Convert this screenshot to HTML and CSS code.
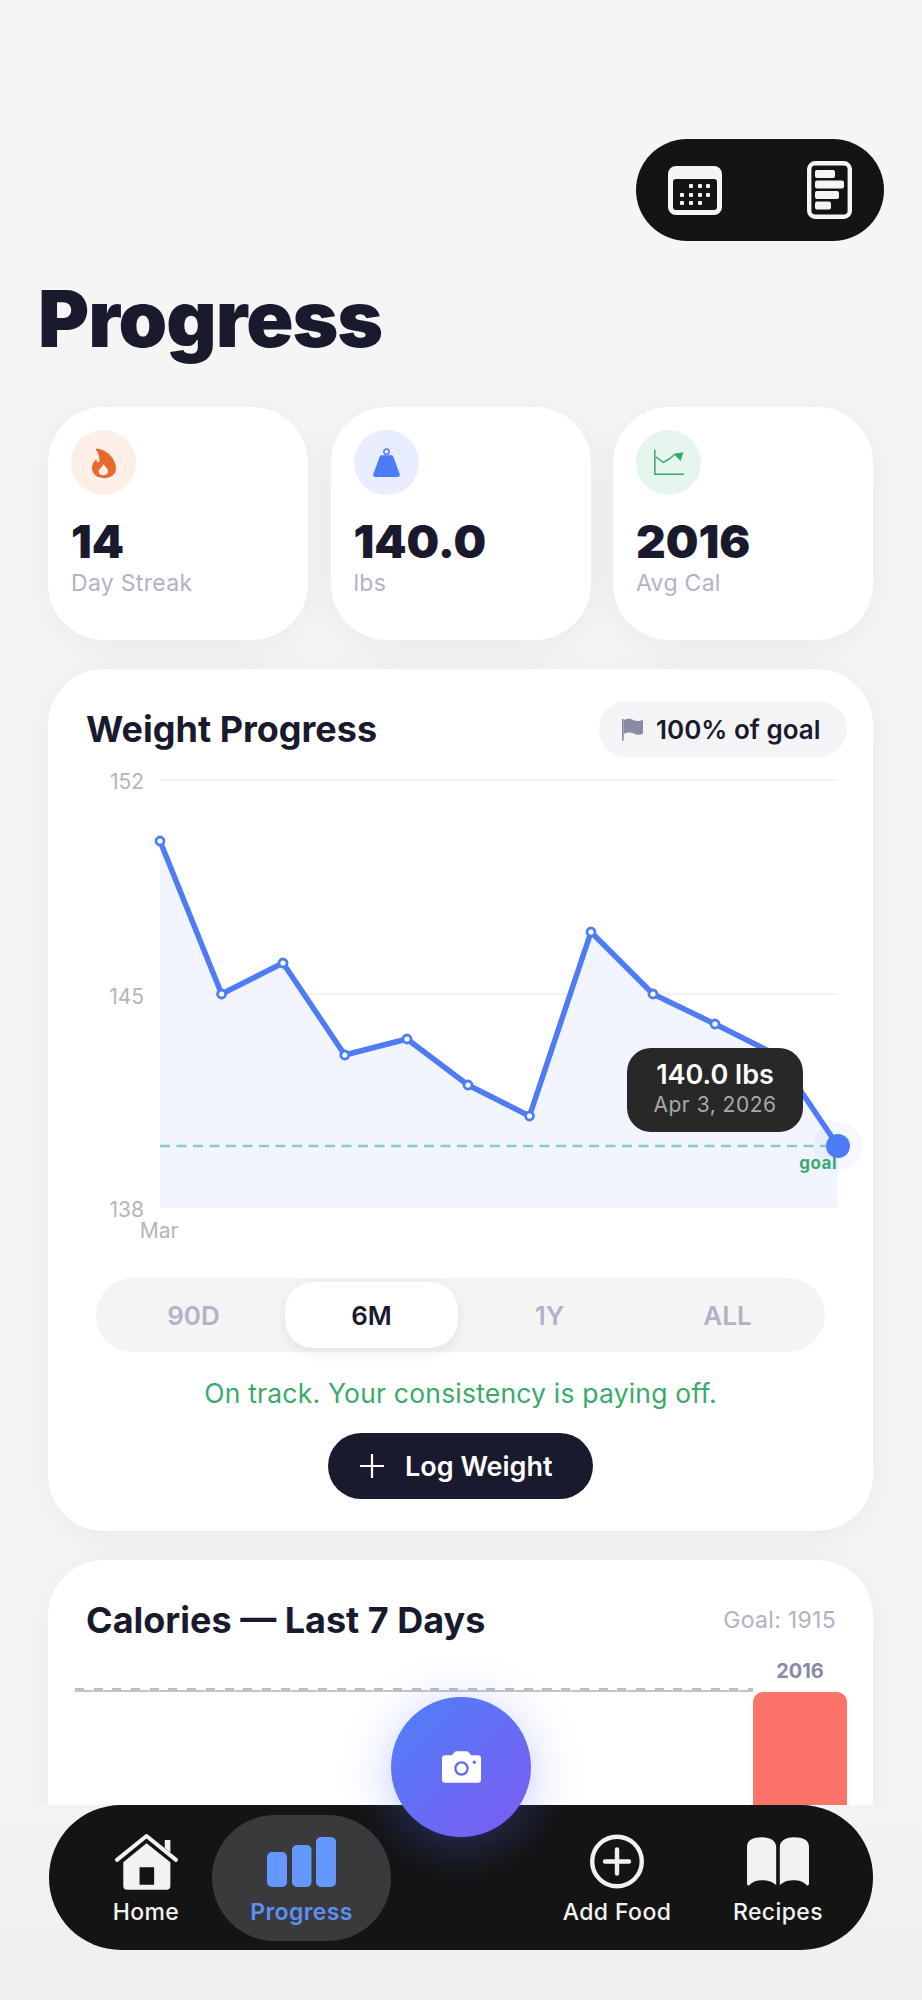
FILE: index.html
```html
<!DOCTYPE html>
<html lang="en">
<head>
<meta charset="utf-8">
<title>Progress</title>
<link rel="stylesheet" href="styles.css">
</head>
<body>
<div class="app">
  <header class="top">
    <div class="top-actions">
      <svg class="ico-cal" viewBox="0 0 54 49"><path fill="#f5f5f5" fill-rule="evenodd" d="M8 0H46A8 8 0 0 1 54 8V41A8 8 0 0 1 46 49H8A8 8 0 0 1 0 41V8A8 8 0 0 1 8 0ZM8 13A3 3 0 0 0 5 16V41A3 3 0 0 0 8 44H46A3 3 0 0 0 49 41V16A3 3 0 0 0 46 13Z"/><g fill="#f5f5f5"><rect x="21" y="18" width="4" height="4" rx="1"/><rect x="30" y="18" width="4" height="4" rx="1"/><rect x="38" y="18" width="4" height="4" rx="1"/><rect x="12" y="27" width="4" height="4" rx="1"/><rect x="21" y="27" width="4" height="4" rx="1"/><rect x="30" y="27" width="4" height="4" rx="1"/><rect x="38" y="27" width="4" height="4" rx="1"/><rect x="12" y="35" width="4" height="4" rx="1"/><rect x="21" y="35" width="4" height="4" rx="1"/><rect x="30" y="35" width="4" height="4" rx="1"/></g></svg>
      <svg class="ico-bars" viewBox="0 0 45 58"><rect x="2.2" y="2.2" width="40.6" height="53.6" rx="6" fill="none" stroke="#f5f5f5" stroke-width="4.4"/><g fill="#f5f5f5"><rect x="8" y="9" width="20" height="8" rx="2"/><rect x="8" y="19.500" width="29" height="8" rx="2"/><rect x="8" y="30" width="24" height="8" rx="2"/><rect x="8" y="40.500" width="16" height="8" rx="2"/></g></svg>
    </div>
    <h1 class="page-title">Progress</h1>
  </header>

  <main class="scroll">
    <section class="stats">
      <div class="stat">
        <div class="stat-icon bg-orange"><svg class="i-flame" viewBox="0 0 72 90"><path fill="#e8692c" d="M10 2C35 0 72 25 72 62C72 80 55 90 36 90C15 90 0 78 0 60C0 48 6 42 12 34C14 42 18 44 22 42C24 30 20 14 10 2Z"/><path fill="#fdeee7" d="M34 48C38 56 48 60 48 70C48 78 42 82 34 82C26 82 20 78 20 70C20 62 30 60 34 48Z"/></svg></div>
        <div class="stat-value">14</div>
        <div class="stat-label">Day Streak</div>
      </div>
      <div class="stat">
        <div class="stat-icon bg-blue"><svg class="i-weight" viewBox="0 0 81 87"><circle cx="40.500" cy="11" r="8" fill="none" stroke="#4d7cf6" stroke-width="4.500"/><path fill="#4d7cf6" d="M20 26Q21 22 26 22H55Q60 22 61 26L80 78Q82 87 74 87H7Q-1 87 1 78Z"/></svg></div>
        <div class="stat-value">140.0</div>
        <div class="stat-label">lbs</div>
      </div>
      <div class="stat">
        <div class="stat-icon bg-green"><svg class="i-trend" viewBox="0 0 90 78"><path d="M2.500 2V75.500H90" fill="none" stroke="#35a968" stroke-width="4.500"/><path d="M6 24L28 40L46 30L60 18" fill="none" stroke="#35a968" stroke-width="4.500"/><path fill="#35a968" d="M88 10L80 36L58 14Z"/></svg></div>
        <div class="stat-value">2016</div>
        <div class="stat-label">Avg Cal</div>
      </div>
    </section>

    <section class="card weight-card">
      <div class="card-head">
        <h2 class="card-title">Weight Progress</h2>
        <div class="goal-pill">
          <svg class="i-flag" viewBox="0 0 64 68"><rect x="0" y="2" width="5" height="66" fill="#8a8aa5"/><path fill="#8a8aa5" d="M5 6C20 -2 30 2 36 6C46 10 56 8 64 4V46C54 52 44 50 36 46C26 42 16 42 5 48Z"/></svg>
          <span>100% of goal</span>
        </div>
      </div>
      <div class="chart">
        <svg class="chart-svg" viewBox="48 760 825 500">
          <path d="M160 841L221.600 994L283 963L344.800 1055L407 1039L468 1085L529.500 1116L591 932L653 994L715 1024L776.500 1055L838 1146V1207H160Z" fill="#f2f5fe"/>
          <g stroke="#f0f0f2" stroke-width="1.500"><path d="M160 780H838"/><path d="M160 994H838"/><path d="M160 1207H838"/></g>
          <path d="M160 1146H838" stroke="#8acfb0" stroke-width="2.500" stroke-dasharray="10 6.500"/>
          <path d="M160 841L221.600 994L283 963L344.800 1055L407 1039L468 1085L529.500 1116L591 932L653 994L715 1024L776.500 1055L838 1146" fill="none" stroke="#4d7cf6" stroke-width="5.500" stroke-linejoin="round"/>
          <g fill="#fff" stroke="#4d7cf6" stroke-width="2.800">
            <circle cx="160" cy="841" r="4"/><circle cx="221.600" cy="994" r="4"/><circle cx="283" cy="963" r="4"/><circle cx="344.800" cy="1055" r="4"/><circle cx="407" cy="1039" r="4"/><circle cx="468" cy="1085" r="4"/><circle cx="529.500" cy="1116" r="4"/><circle cx="591" cy="932" r="4"/><circle cx="653" cy="994" r="4"/><circle cx="715" cy="1024" r="4"/>
          </g>
          <g class="axis"><text x="144" y="789" text-anchor="end">152</text><text x="144" y="1004" text-anchor="end">145</text><text x="144" y="1217" text-anchor="end">138</text><text x="159" y="1238" text-anchor="middle">Mar</text></g>
          <text class="goal-text" x="837" y="1169" text-anchor="end">goal</text>
          <circle cx="838" cy="1146" r="24" fill="#4d7cf6" opacity=".05"/>
          <circle cx="838" cy="1146" r="12" fill="#4d7cf6"/>
        </svg>
        <div class="tip"><div class="tip-value">140.0 lbs</div><div class="tip-date">Apr 3, 2026</div></div>
      </div>
      <div class="segment">
        <div class="seg">90D</div>
        <div class="seg seg-active">6M</div>
        <div class="seg">1Y</div>
        <div class="seg">ALL</div>
      </div>
      <p class="track">On track. Your consistency is paying off.</p>
      <div class="log-row">
        <div class="log-btn"><svg class="i-plus" viewBox="0 0 24 24"><path d="M12 0V24M0 12H24" stroke="#fff" stroke-width="2.200"/></svg><span>Log Weight</span></div>
      </div>
    </section>

    <section class="card cal-card">
      <div class="card-head cal-head">
        <h2 class="card-title">Calories — Last 7 Days</h2>
        <span class="cal-goal">Goal: 1915</span>
      </div>
      <div class="bars">
        <div class="goal-line"></div>
        <div class="bar-col">
          <div class="bar-value">2016</div>
          <div class="bar"></div>
        </div>
      </div>
    </section>
  </main>

  <div class="tabbar">
    <nav class="nav">
      <div class="tab tab-home">
        <svg class="i-home" viewBox="0 0 190 170"><path fill="#f2f2f2" d="M150 20H167V58L150 44Z"/><path fill="none" stroke="#f2f2f2" stroke-width="12" stroke-linecap="round" stroke-linejoin="round" d="M6 80L95 8L184 80"/><path fill="#f2f2f2" fill-rule="evenodd" d="M95 30L167 87V158Q167 170 155 170H37Q25 170 25 158V87ZM74 102V155H118V102Z"/></svg>
        <span>Home</span>
      </div>
      <div class="tab tab-active">
        <svg class="i-prog" viewBox="0 0 69 50"><g fill="#6598ff"><rect x="0" y="15" width="20" height="35" rx="5"/><rect x="25" y="8" width="19.500" height="42" rx="5"/><rect x="49" y="0" width="20" height="50" rx="5"/></g></svg>
        <span>Progress</span>
      </div>
      <div class="tab tab-add">
        <svg class="i-add" viewBox="0 0 54 55"><circle cx="27" cy="27.500" r="24.800" fill="none" stroke="#f2f2f2" stroke-width="4.400"/><path d="M15 27.500H39M27 15.500V39.500" stroke="#f2f2f2" stroke-width="4.400" stroke-linecap="round"/></svg>
        <span>Add Food</span>
      </div>
      <div class="tab tab-recipes">
        <svg class="i-book" viewBox="0 0 187 147"><g fill="#f2f2f2"><path d="M0 30C0 8 18 0 45 0C70 0 88 10 88 30V145C75 132 60 130 45 130C28 130 15 135 6 146Q0 147 0 140Z"/><path d="M187 30C187 8 169 0 142 0C117 0 99 10 99 30V145C112 132 127 130 142 130C159 130 172 135 181 146Q187 147 187 140Z"/></g></svg>
        <span>Recipes</span>
      </div>
    </nav>
    <div class="fab">
      <svg class="i-cam" viewBox="0 0 118 95"><path fill="#fff" d="M38 2Q40 0 44 0H74Q78 0 80 2L88 12H108Q118 12 118 22V85Q118 95 108 95H10Q0 95 0 85V22Q0 12 10 12H30Z"/><circle cx="59" cy="52" r="18.500" fill="none" stroke="#6169f4" stroke-width="7"/><circle cx="98" cy="33" r="5" fill="#6169f4"/></svg>
    </div>
  </div>
</div>
</body>
</html>
```

FILE: styles.css
```css
* { box-sizing: border-box; }
html, body { margin: 0; padding: 0; }
body {
  background: #f5f5f5;
  font-family: Inter, "Liberation Sans", sans-serif;
  color: #1a1a2e;
}
.app {
  position: relative;
  width: 922px;
  height: 2000px;
  overflow: hidden;
}
.top {
  height: 388px;
  padding: 139px 38px 0;
}
.top-actions {
  width: 248px;
  height: 102px;
  margin-left: auto;
  border-radius: 51px;
  background: #141414;
  display: flex;
  align-items: center;
  justify-content: space-between;
  padding: 0 32px;
}
.ico-cal { width: 54px; height: 49px; }
.ico-bars { width: 45px; height: 58px; }
.page-title {
  margin: 33px 0 0;
  font-size: 78px;
  line-height: 90px;
  font-weight: 900;
  letter-spacing: -1px;
}
.scroll {
  height: 1612px;
  overflow: hidden;
  padding: 19px 49px 0 48px;
}
.stats {
  display: grid;
  grid-template-columns: repeat(3, 260px);
  justify-content: space-between;
}
.stat {
  height: 233px;
  border-radius: 56px;
  background: #fff;
  box-shadow: 0 6px 40px rgba(0, 0, 0, .05);
  padding: 23px 23px;
}
.stat-icon {
  width: 65px;
  height: 65px;
  border-radius: 50%;
  display: flex;
  align-items: center;
  justify-content: center;
}
.bg-orange { background: #fdeee7; }
.bg-blue { background: #e8eefd; }
.bg-green { background: #e6f5ed; }
.i-flame { width: 24px; height: 30px; }
.i-weight { width: 27px; height: 29px; margin-top: -1px; }
.i-trend { width: 30px; height: 26px; margin-top: -2px; }
.stat-value {
  margin-top: 18px;
  font-size: 46px;
  line-height: 56px;
  font-weight: 900;
}
.stat-label {
  font-size: 23px;
  line-height: 28px;
  color: #b2b2c6;
  letter-spacing: .3px;
}
.card {
  background: #fff;
  border-radius: 56px;
  box-shadow: 0 6px 40px rgba(0, 0, 0, .05);
}
.weight-card {
  margin-top: 29px;
  height: 862px;
  padding: 32px 0;
}
.card-head {
  display: flex;
  align-items: center;
  justify-content: space-between;
  padding: 0 26px 0 38px;
  height: 56px;
}
.card-title {
  margin: 0;
  font-size: 36px;
  line-height: 44px;
  font-weight: 700;
}
.goal-pill {
  width: 248px;
  height: 56px;
  border-radius: 28px;
  background: #f4f4f7;
  display: flex;
  align-items: center;
  gap: 13px;
  padding-left: 23px;
  font-size: 26px;
  font-weight: 600;
}
.i-flag { width: 21px; height: 23px; }
.chart {
  position: relative;
  margin-top: 3px;
  height: 500px;
}
.chart-svg { display: block; width: 825px; height: 500px; }
.axis text {
  font-family: Inter, "Liberation Sans", sans-serif;
  font-size: 21px;
  fill: #b5b5b8;
}
.goal-text {
  font-family: Inter, "Liberation Sans", sans-serif;
  font-size: 17px;
  font-weight: 700;
  fill: #3aaa6b;
  letter-spacing: .5px;
}
.tip {
  position: absolute;
  left: 579px;
  top: 288px;
  width: 176px;
  height: 84px;
  border-radius: 24px;
  background: #282828;
  text-align: center;
  padding-top: 10px;
}
.tip-value {
  font-size: 27px;
  line-height: 34px;
  font-weight: 600;
  color: #fff;
}
.tip-date {
  font-size: 21px;
  line-height: 26px;
  color: #a8a8a8;
  letter-spacing: .5px;
}
.segment {
  margin: 18px 48px 0;
  height: 74px;
  border-radius: 37px;
  background: #f4f4f5;
  display: grid;
  grid-template-columns: repeat(4, 173px);
  column-gap: 5px;
  padding: 4px 11px;
}
.seg {
  border-radius: 28px;
  display: flex;
  align-items: center;
  justify-content: center;
  font-size: 26px;
  font-weight: 600;
  color: #b2b2c6;
}
.seg-active {
  background: #fff;
  color: #1a1a2e;
  box-shadow: 0 4px 14px rgba(0, 0, 0, .08);
}
.track {
  margin: 24px 0 0;
  text-align: center;
  font-size: 26.500px;
  line-height: 34px;
  color: #3aaa6b;
  letter-spacing: .2px;
}
.log-row {
  margin-top: 23px;
  display: flex;
  justify-content: center;
}
.log-btn {
  width: 265px;
  height: 66px;
  border-radius: 33px;
  background: #1a1a2e;
  color: #fff;
  display: flex;
  align-items: center;
  gap: 21px;
  padding-left: 32px;
  font-size: 27px;
  font-weight: 600;
}
.i-plus { width: 24px; height: 24px; }
.cal-card {
  margin-top: 29px;
  height: 500px;
  padding-top: 38px;
}
.cal-head { padding-right: 37px; height: 44px; }
.cal-goal {
  font-size: 23px;
  color: #b2b2c6;
  letter-spacing: .3px;
}
.bars {
  position: relative;
  display: flex;
  justify-content: flex-end;
  padding-right: 26px;
  margin-top: 17px;
  height: 300px;
}
.goal-line {
  position: absolute;
  left: 27px;
  right: 120px;
  top: 29px;
  height: 4px;
  background:
    repeating-linear-gradient(90deg, #bdbdc2 0 9px, transparent 9px 18.700px) top / 100% 2px no-repeat,
    linear-gradient(#c4c4c8, #c4c4c8) bottom / 100% 2px no-repeat;
}
.bar-col { width: 94px; text-align: center; }
.bar-value {
  font-size: 20px;
  line-height: 24px;
  font-weight: 700;
  color: #8a8aa5;
}
.bar {
  margin-top: 9px;
  height: 260px;
  border-radius: 10px 10px 0 0;
  background: #fb7269;
}
.tabbar {
  position: absolute;
  left: 0;
  right: 0;
  bottom: 0;
  height: 195px;
  background: linear-gradient(#f3f3f3, #efefef);
}
.nav {
  position: absolute;
  left: 49px;
  top: 0;
  width: 824px;
  height: 145px;
  border-radius: 72px;
  background: #141414;
  display: flex;
  align-items: stretch;
  padding: 10px 0 9px 31px;
}
.tab {
  display: flex;
  flex-direction: column;
  align-items: center;
  font-size: 23px;
  line-height: 28px;
  font-weight: 500;
  color: #f2f2f2;
  letter-spacing: .4px;
}
.tab span { position: absolute; top: 93px; }
.tab svg { display: block; }
.tab-home { width: 132px; padding-top: 18px; }
.tab-active {
  width: 179px;
  border-radius: 63px;
  background: #3a3a3c;
  color: #5d8ff2;
  font-weight: 600;
  padding-top: 22px;
}
.tab-add { width: 130px; margin-left: 161px; padding-top: 19px; }
.tab-recipes { width: 130px; margin-left: 31px; padding-top: 22px; }
.i-home { width: 63px; height: 57px; }
.i-prog { width: 69px; height: 50px; }
.i-add { width: 54px; height: 55px; }
.i-book { width: 62px; height: 49px; }
.fab {
  position: absolute;
  left: 391px;
  top: -108px;
  width: 140px;
  height: 140px;
  border-radius: 50%;
  background: linear-gradient(135deg, #4f7ff8, #7c5cf0);
  box-shadow: 0 8px 48px rgba(80, 110, 255, .35);
  display: flex;
  align-items: center;
  justify-content: center;
}
.i-cam { width: 39px; height: 32px; }
```
